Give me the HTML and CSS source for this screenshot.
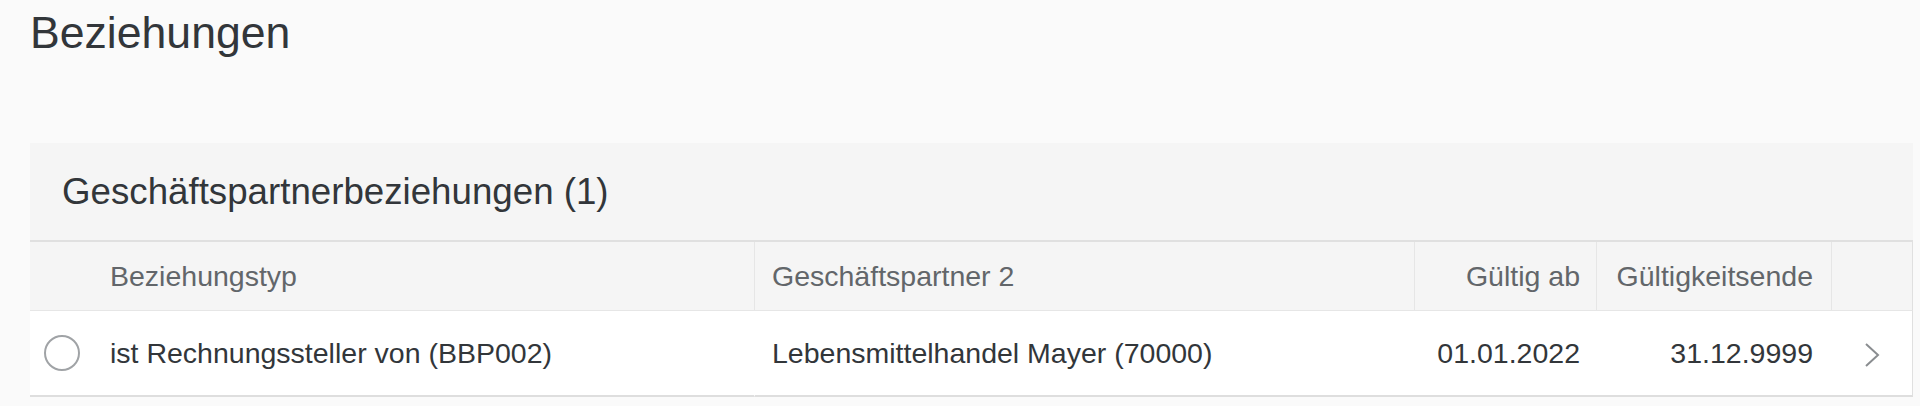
FILE: index.html
```html
<!DOCTYPE html>
<html lang="de">
<head>
    <meta charset="UTF-8">
    <meta name="viewport" content="width=device-width, initial-scale=1.0">
    <title>Beziehungen</title>
    <link rel="stylesheet" href="styles.css">
</head>

<body>

    <h1 class="page-title">Beziehungen</h1>

    <section class="panel">
        <div class="panel-header">
            <h2>Geschäftspartnerbeziehungen (1)</h2>
        </div>

        <table class="rel-table">
            <colgroup>
                <col class="col-select">
                <col class="col-type">
                <col class="col-partner">
                <col class="col-from">
                <col class="col-to">
                <col>
            </colgroup>
            <thead>
                <tr>
                    <th></th>
                    <th>Beziehungstyp</th>
                    <th>Geschäftspartner 2</th>
                    <th class="num">Gültig ab</th>
                    <th class="num end">Gültigkeitsende</th>
                    <th class="last"></th>
                </tr>
            </thead>
            <tbody>
                <tr>
                    <td class="select"><span class="radio"></span></td>
                    <td>ist Rechnungssteller von (BBP002)</td>
                    <td class="partner">Lebensmittelhandel Mayer (70000)</td>
                    <td class="num">01.01.2022</td>
                    <td class="num end">31.12.9999</td>
                    <td class="last nav">
                        <svg width="16" height="26" viewBox="0 0 16 26">
                            <polyline points="2,2 14,13 2,24" fill="none" stroke="#8a8d90" stroke-width="2"/>
                        </svg>
                    </td>
                </tr>
            </tbody>
        </table>
    </section>

</body>
</html>
```

FILE: styles.css
```css
body {
    margin: 0;
    padding: 0 7px 0 30px;
    background-color: #fafafa;
    font-family: 'Liberation Sans', Arial, sans-serif;
    color: #32363a;
}

.page-title {
    margin: 11px 0 0;
    font-size: 44.6px;
    line-height: 44px;
    font-weight: normal;
}

.panel {
    margin-top: 88px;
}

.panel-header {
    height: 97px;
    padding-left: 32px;
    background-color: #f5f5f5;
    border-bottom: 2px solid #e0e0e0;
    display: flex;
    align-items: center;
}

.panel-header h2 {
    margin: 0;
    font-size: 36.7px;
    font-weight: normal;
}

.rel-table {
    width: 100%;
    table-layout: fixed;
    border-collapse: separate;
    border-spacing: 0;
    font-size: 28.5px;
}

.col-select {
    width: 64px;
}

.col-type,
.col-partner {
    width: 660px;
}

.col-from {
    width: 182px;
}

.col-to {
    width: 235px;
}

th,
td {
    padding: 0 16px;
    text-align: left;
    white-space: nowrap;
    vertical-align: middle;
}

th {
    height: 68px;
    background-color: #f5f5f5;
    color: #62666a;
    font-weight: normal;
    border-bottom: 1px solid #e6e6e6;
}

th:nth-child(n+3) {
    border-left: 1px solid #e6e6e6;
}

th:nth-child(3),
td.partner {
    padding-left: 17px;
}

td {
    height: 84px;
    background-color: #fff;
    border-bottom: 2px solid #dedede;
}

td.partner {
    border-left: 1px solid transparent;
}

.num {
    text-align: right;
}

.end {
    padding-right: 18px;
}

.last {
    border-right: 1px solid #e0e0e0;
    padding: 0;
}

td.select {
    padding: 0;
    text-align: center;
}

.radio {
    display: inline-block;
    width: 32px;
    height: 32px;
    border: 2px solid #a0a3a6;
    border-radius: 50%;
    vertical-align: middle;
}

td.nav {
    text-align: center;
}

td.nav svg {
    vertical-align: middle;
}
```
